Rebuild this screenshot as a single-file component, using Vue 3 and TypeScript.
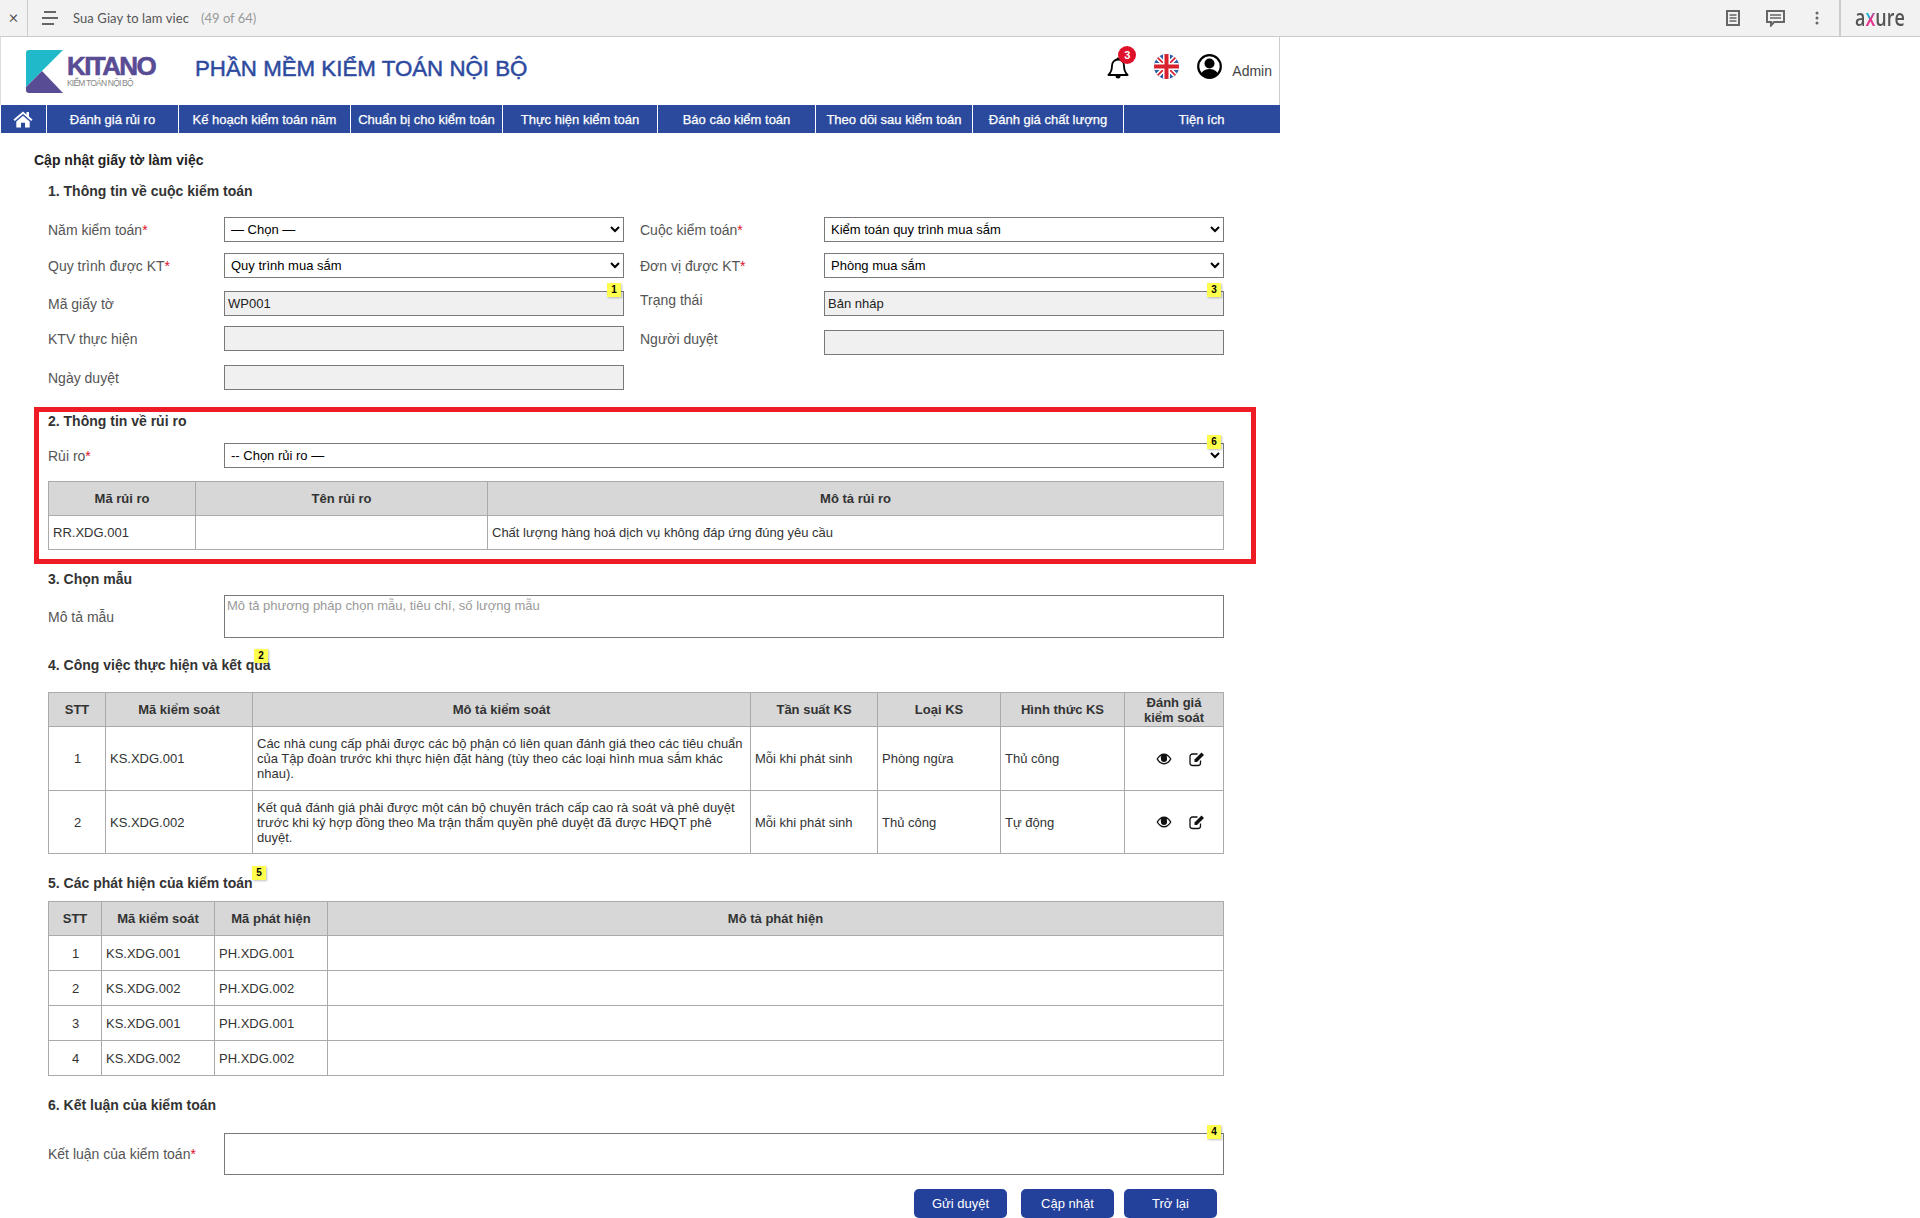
<script setup lang="ts">
interface Field {
  label: string
  required?: boolean
  kind: 'select' | 'input'
  value?: string
  note?: number
  raised?: boolean
}

const navItems = [
  'Đánh giá rủi ro',
  'Kế hoạch kiểm toán năm',
  'Chuẩn bị cho kiểm toán',
  'Thực hiện kiểm toán',
  'Báo cáo kiểm toán',
  'Theo dõi sau kiểm toán',
  'Đánh giá chất lượng',
  'Tiện ích',
]

const leftFields: Field[] = [
  { label: 'Năm kiểm toán', required: true, kind: 'select', value: '— Chọn —' },
  { label: 'Quy trình được KT', required: true, kind: 'select', value: 'Quy trình mua sắm' },
  { label: 'Mã giấy tờ', kind: 'input', value: 'WP001', note: 1 },
  { label: 'KTV thực hiện', kind: 'input' },
  { label: 'Ngày duyệt', kind: 'input' },
]

const rightFields: Field[] = [
  { label: 'Cuộc kiểm toán', required: true, kind: 'select', value: 'Kiểm toán quy trình mua sắm' },
  { label: 'Đơn vị được KT', required: true, kind: 'select', value: 'Phòng mua sắm' },
  { label: 'Trạng thái', kind: 'input', value: 'Bản nháp', note: 3, raised: true },
  { label: 'Người duyệt', kind: 'input', raised: true },
]

const controls = [
  {
    stt: 1,
    code: 'KS.XDG.001',
    desc: 'Các nhà cung cấp phải được các bộ phận có liên quan đánh giá theo các tiêu chuẩn của Tập đoàn trước khi thực hiện đặt hàng (tùy theo các loại hình mua sắm khác nhau).',
    freq: 'Mỗi khi phát sinh',
    type: 'Phòng ngừa',
    form: 'Thủ công',
  },
  {
    stt: 2,
    code: 'KS.XDG.002',
    desc: 'Kết quả đánh giá phải được một cán bộ chuyên trách cấp cao rà soát và phê duyệt trước khi ký hợp đồng theo Ma trận thẩm quyền phê duyệt đã được HĐQT phê duyệt.',
    freq: 'Mỗi khi phát sinh',
    type: 'Thủ công',
    form: 'Tự động',
  },
]

const findings = [
  { stt: 1, control: 'KS.XDG.001', code: 'PH.XDG.001' },
  { stt: 2, control: 'KS.XDG.002', code: 'PH.XDG.002' },
  { stt: 3, control: 'KS.XDG.001', code: 'PH.XDG.001' },
  { stt: 4, control: 'KS.XDG.002', code: 'PH.XDG.002' },
]
</script>

<template>
  <div class="player-bar">
    <span class="close">×</span>
    <svg class="menu-icon" width="16" height="14" viewBox="0 0 16 14">
      <rect x="2" y="0" width="12" height="2" fill="#666" />
      <rect x="0" y="6" width="16" height="2" fill="#666" />
      <rect x="0" y="12" width="12" height="2" fill="#666" />
    </svg>
    <span class="page-name">Sua Giay to lam viec</span>
    <span class="page-count">(49 of 64)</span>
    <div class="player-tools">
      <svg width="14" height="16" viewBox="0 0 14 16">
        <rect x="1" y="1" width="12" height="14" fill="none" stroke="#666" stroke-width="2" />
        <path d="M3.5 5h7M3.5 8h7M3.5 11h7" stroke="#666" stroke-width="1.5" />
      </svg>
      <svg width="19" height="17" viewBox="0 0 19 17">
        <path d="M1 1h17v11H8l-3 3.5V12H1z" fill="none" stroke="#666" stroke-width="2" />
        <path d="M4 5h11M4 8h11" stroke="#666" stroke-width="1.5" />
      </svg>
      <svg class="dots" width="4" height="14" viewBox="0 0 4 14">
        <circle cx="2" cy="2" r="1.5" fill="#666" />
        <circle cx="2" cy="7" r="1.5" fill="#666" />
        <circle cx="2" cy="12" r="1.5" fill="#666" />
      </svg>
    </div>
    <div class="axure"><span class="axure-word">a<span class="axure-x">x</span>ure</span></div>
  </div>

  <div class="app-page">
    <header class="brand-row">
      <div class="logo">
        <svg width="37" height="43" viewBox="0 0 37 43">
          <path d="M3 0h34L0 37V3a3 3 0 0 1 3-3z" fill="#1fb9c9" />
          <path d="M0 37 16 21 37 43H3a3 3 0 0 1-3-3z" fill="#584c94" />
        </svg>
        <div class="logo-text">
          <div class="logo-name">KITANO</div>
          <div class="logo-sub">KIỂM TOÁN NỘI BỘ</div>
        </div>
      </div>
      <h1 class="app-title">PHẦN MỀM KIỂM TOÁN NỘI BỘ</h1>
      <div class="user-area">
        <div class="bell">
          <svg width="22" height="23" viewBox="0 0 22 23">
            <path d="M11 2.5c-3.6 0-6 2.7-6 6.3 0 4.6-1.2 7-3.6 9.2h19.2C18.200 15.800 17 13.400 17 8.800c0-3.600-2.400-6.300-6-6.300z" fill="#fff" stroke="#000" stroke-width="1.800" stroke-linejoin="round" />
            <path d="M8.500 19a2.500 2.500 0 0 0 5 0z" fill="#000" />
            <circle cx="11" cy="1.800" r="1.300" fill="#000" />
          </svg>
          <span class="bell-badge">3</span>
        </div>
        <svg class="flag" width="25" height="25" viewBox="0 0 25 25">
          <clipPath id="flag-clip"><ellipse cx="12.500" cy="12.500" rx="12.500" ry="12.500" /></clipPath>
          <g clip-path="url(#flag-clip)">
            <rect width="25" height="25" fill="#2a5ca8" />
            <path d="M0 0 25 25M25 0 0 25" stroke="#fff" stroke-width="5" />
            <path d="M0 0 25 25M25 0 0 25" stroke="#d8202f" stroke-width="1.600" />
            <path d="M12.500 0v25M0 12.500h25" stroke="#fff" stroke-width="7" />
            <path d="M12.500 0v25M0 12.500h25" stroke="#d8202f" stroke-width="4" />
          </g>
        </svg>
        <svg class="avatar" width="25" height="25" viewBox="0 0 25 25">
          <clipPath id="avatar-clip"><circle cx="12.500" cy="12.500" r="11" /></clipPath>
          <circle cx="12.500" cy="12.500" r="11.300" fill="#fff" stroke="#000" stroke-width="2.200" />
          <g clip-path="url(#avatar-clip)">
            <circle cx="12.500" cy="9.500" r="5" fill="#000" />
            <ellipse cx="12.500" cy="22" rx="9" ry="7" fill="#000" />
          </g>
        </svg>
        <span class="admin">Admin</span>
      </div>
    </header>

    <nav class="main-nav">
      <a class="nav-item">
        <svg class="home" width="20" height="17" viewBox="0 0 20 17">
          <path d="M10 0.500 0.500 8.500l1.300 1.500L10 3.100l8.200 6.900 1.300-1.500-3.500-3V1h-2.500v2.400z" fill="#fff" />
          <path d="M10 4.800 3.300 10.400V16.500h4.700v-4.800h4v4.800h4.700v-6.100z" fill="#fff" />
        </svg>
      </a>
      <a v-for="item in navItems" :key="item" class="nav-item">{{ item }}</a>
    </nav>

    <main class="content">
      <div class="page-title">Cập nhật giấy tờ làm việc</div>

      <section class="plain-section">
        <h2 class="section-title first">1. Thông tin về cuộc kiểm toán</h2>
        <div class="audit-form">
          <div class="form-col left-col">
            <div v-for="f in leftFields" :key="f.label" class="form-row">
              <label class="field-label">{{ f.label }}<span v-if="f.required" class="req">*</span></label>
              <div class="field">
                <select v-if="f.kind === 'select'" class="ctl">
                  <option>{{ f.value }}</option>
                </select>
                <input v-else class="ctl ctl-ro" readonly :value="f.value" />
                <span v-if="f.note" class="note">{{ f.note }}</span>
              </div>
            </div>
          </div>
          <div class="form-col right-col">
            <div v-for="f in rightFields" :key="f.label" class="form-row">
              <label class="field-label" :class="{ raised: f.raised }">{{ f.label }}<span v-if="f.required" class="req">*</span></label>
              <div class="field">
                <select v-if="f.kind === 'select'" class="ctl">
                  <option>{{ f.value }}</option>
                </select>
                <input v-else class="ctl ctl-ro" readonly :value="f.value" />
                <span v-if="f.note" class="note">{{ f.note }}</span>
              </div>
            </div>
          </div>
        </div>
      </section>

      <section class="risk-box">
        <h2 class="section-title">2. Thông tin về rủi ro</h2>
        <div class="form-row risk-row">
          <label class="field-label">Rủi ro<span class="req">*</span></label>
          <div class="field wide">
            <select class="ctl"><option>-- Chọn rủi ro —</option></select>
            <span class="note">6</span>
          </div>
        </div>
        <table class="grid-table risk-table">
          <colgroup>
            <col class="w-risk-1" /><col class="w-risk-2" /><col />
          </colgroup>
          <thead>
            <tr><th>Mã rủi ro</th><th>Tên rủi ro</th><th>Mô tả rủi ro</th></tr>
          </thead>
          <tbody>
            <tr>
              <td>RR.XDG.001</td>
              <td></td>
              <td>Chất lượng hàng hoá dịch vụ không đáp ứng đúng yêu cầu</td>
            </tr>
          </tbody>
        </table>
      </section>

      <section class="plain-section">
        <h2 class="section-title s3">3. Chọn mẫu</h2>
        <div class="form-row area-row sample-row">
          <label class="field-label">Mô tả mẫu</label>
          <div class="field wide">
            <textarea class="ctl area" placeholder="Mô tả phương pháp chọn mẫu, tiêu chí, số lượng mẫu"></textarea>
          </div>
        </div>

        <h2 class="section-title s4">4. Công việc thực hiện và kết quả<span class="note note-2">2</span></h2>
        <table class="grid-table work-table">
          <colgroup>
            <col class="w-a" /><col class="w-b" /><col class="w-c" /><col class="w-d" /><col class="w-e" /><col class="w-f" /><col />
          </colgroup>
          <thead>
            <tr>
              <th>STT</th><th>Mã kiểm soát</th><th>Mô tả kiểm soát</th><th>Tần suất KS</th><th>Loại KS</th><th>Hình thức KS</th><th>Đánh giá<br />kiểm soát</th>
            </tr>
          </thead>
          <tbody>
            <tr v-for="c in controls" :key="c.stt">
              <td class="center">{{ c.stt }}</td>
              <td>{{ c.code }}</td>
              <td>{{ c.desc }}</td>
              <td>{{ c.freq }}</td>
              <td>{{ c.type }}</td>
              <td>{{ c.form }}</td>
              <td>
                <div class="row-actions">
                  <svg width="16" height="12" viewBox="0 0 16 12">
                    <path d="M0.500 6C2.500 2.500 5 0.500 8 0.500S13.500 2.500 15.500 6C13.500 9.500 11 11.500 8 11.500S2.500 9.500 0.500 6z" fill="#111" />
                    <path d="M2 6c1-1.500 2-2.600 3.300-3.300A4 4 0 0 0 5 6a3 3 0 0 0 6 0c0-1.200-.1-2.400-.3-3.300C12 3.400 13 4.500 14 6c-1.600 2.400-3.600 4-6 4S3.600 8.400 2 6z" fill="#fff" />
                    <circle cx="8" cy="5.500" r="2.600" fill="#111" />
                  </svg>
                  <svg width="16" height="16" viewBox="0 0 16 16">
                    <path d="M11.500 9.500V12a2.500 2.500 0 0 1-2.500 2.500H3.500A2.500 2.500 0 0 1 1 12V5.500A2.500 2.500 0 0 1 3.500 3h5" fill="none" stroke="#111" stroke-width="1.300" />
                    <path d="M5.500 8.500 12.500 1.500l2.500 2.500-7 7H5.500z" fill="#111" />
                  </svg>
                </div>
              </td>
            </tr>
          </tbody>
        </table>

        <h2 class="section-title s5">5. Các phát hiện của kiểm toán<span class="note note-5">5</span></h2>
        <table class="grid-table finding-table">
          <colgroup>
            <col class="w-g" /><col class="w-h" /><col class="w-i" /><col />
          </colgroup>
          <thead>
            <tr><th>STT</th><th>Mã kiểm soát</th><th>Mã phát hiện</th><th>Mô tả phát hiện</th></tr>
          </thead>
          <tbody>
            <tr v-for="r in findings" :key="r.stt">
              <td class="center">{{ r.stt }}</td>
              <td>{{ r.control }}</td>
              <td>{{ r.code }}</td>
              <td></td>
            </tr>
          </tbody>
        </table>

        <h2 class="section-title s6">6. Kết luận của kiểm toán</h2>
        <div class="form-row area-row conclusion">
          <label class="field-label">Kết luận của kiểm toán<span class="req">*</span></label>
          <div class="field wide">
            <textarea class="ctl area"></textarea>
            <span class="note">4</span>
          </div>
        </div>

        <div class="actions">
          <button class="btn">Gửi duyệt</button>
          <button class="btn">Cập nhật</button>
          <button class="btn">Trở lại</button>
        </div>
      </section>
    </main>
  </div>
</template>

<style>
html,
body {
  background: #fff;
  overflow: hidden;
}
</style>

<style scoped>
.player-bar {
  height: 36px;
  background: #f2f2f2;
  border-bottom: 1px solid #ccc;
  display: flex;
  align-items: center;
  font-family: Lato, "Open Sans", sans-serif;
  font-size: 13px;
  color: #555;
}

.close {
  width: 28px;
  border-right: 1px solid #ccc;
  height: 36px;
  line-height: 36px;
  text-align: center;
  font-size: 17px;
  flex: none;
  box-sizing: border-box;
}

.menu-icon {
  margin: 0 15px 0 14px;
  flex: none;
}

.page-name {
  letter-spacing: 0.1px;
}

.page-count {
  color: #999;
  margin-left: 12px;
}

.player-tools {
  margin-left: auto;
  display: flex;
  align-items: center;
  width: 113px;
  gap: 26px;
}

.dots {
  margin-left: 4px;
}

.axure {
  width: 81px;
  height: 37px;
  border-left: 2px solid #ccc;
  box-sizing: border-box;
  padding-left: 14px;
  overflow: hidden;
}

.axure-word {
  display: inline-block;
  font-family: "Open Sans", sans-serif;
  font-size: 23px;
  font-weight: 600;
  line-height: 35px;
  color: #555;
  transform: scaleX(0.78);
  transform-origin: left center;
}

.axure-x {
  background: linear-gradient(135deg, #1fb5d8 45%, #e8308c 55%);
  -webkit-background-clip: text;
  background-clip: text;
  color: transparent;
}

.app-page {
  width: 1280px;
  font-family: "Liberation Sans", Arial, sans-serif;
  font-size: 13px;
  color: #333;
}

.brand-row {
  height: 68px;
  box-sizing: border-box;
  border-left: 1px solid #ddd;
  border-right: 1px solid #ccc;
  padding-left: 25px;
  display: flex;
  align-items: flex-start;
}

.logo {
  display: flex;
  width: 169px;
  margin-top: 13px;
  flex: none;
}

.logo-text {
  margin-left: 4px;
}

.logo-name {
  font-size: 26px;
  line-height: 24px;
  margin-top: 4px;
  font-weight: 700;
  color: #584c94;
  letter-spacing: -1.6px;
  -webkit-text-stroke: 0.6px #584c94;
}

.logo-sub {
  font-size: 8.5px;
  line-height: 10px;
  color: #888;
  letter-spacing: -0.8px;
}

.app-title {
  margin: 17px 0 0;
  font-size: 22.3px;
  line-height: 30px;
  font-weight: 400;
  -webkit-text-stroke: 0.5px #2e4a9f;
  color: #2e4a9f;
}

.user-area {
  margin-left: auto;
  margin-top: 17px;
  display: flex;
  align-items: flex-start;
  padding-right: 7px;
}

.bell {
  position: relative;
  width: 22px;
  height: 23px;
  margin-top: 3px;
}

.bell-badge {
  position: absolute;
  left: 11px;
  top: -11px;
  width: 18px;
  height: 18px;
  line-height: 18px;
  border-radius: 50%;
  background: #e0112b;
  color: #fff;
  text-align: center;
  font-size: 11px;
  font-weight: 700;
}

.flag {
  margin-left: 25px;
}

.avatar {
  margin-left: 18px;
}

.admin {
  margin-left: 10px;
  line-height: 16px;
  margin-top: 9px;
  font-size: 14px;
  color: #444;
}

.main-nav {
  margin-left: 1px;
  height: 28px;
  display: grid;
  grid-template-columns: 46px 132px 172px 152px 155px 158px 157px 151px 155px;
  background: #2b4a9e;
}

.nav-item {
  display: flex;
  align-items: center;
  justify-content: center;
  color: #fff;
  border-right: 1px solid #fff;
  font-size: 13px;
  white-space: nowrap;
  -webkit-text-stroke: 0.25px #fff;
}

.nav-item:last-child {
  border-right: 0;
}

.home {
  margin-right: 2px;
}

.content {
  padding-left: 34px;
}

.page-title {
  margin-top: 17px;
  font-size: 14px;
  line-height: 20px;
  font-weight: 700;
  color: #222;
}

.plain-section {
  padding-left: 14px;
}

.section-title {
  position: relative;
  margin: 0;
  font-size: 14px;
  line-height: 18px;
  font-weight: 700;
  color: #333;
}

.section-title.first {
  margin-top: 12px;
}

.audit-form {
  display: flex;
  margin-top: 17px;
}

.form-col {
  flex: none;
}

.left-col {
  width: 592px;
}

.form-row {
  display: flex;
  align-items: center;
}

.left-col .form-row:nth-child(2),
.right-col .form-row:nth-child(2) {
  margin-top: 11px;
}

.left-col .form-row:nth-child(3),
.right-col .form-row:nth-child(3) {
  margin-top: 13px;
}

.left-col .form-row:nth-child(4) {
  margin-top: 10px;
}

.left-col .form-row:nth-child(5) {
  margin-top: 14px;
}

.right-col .form-row:nth-child(4) {
  margin-top: 14px;
}

.field-label {
  width: 176px;
  flex: none;
  font-size: 14px;
  color: #555;
}

.right-col .field-label {
  width: 184px;
}

.field-label.raised {
  margin-bottom: 8px;
}

.req {
  color: #e0112b;
}

.field {
  position: relative;
  width: 400px;
  height: 25px;
}

.field.wide {
  width: 1000px;
}

.ctl {
  display: block;
  width: 100%;
  height: 100%;
  box-sizing: border-box;
  border: 1px solid #797979;
  border-radius: 0;
  outline: none;
  margin: 0;
  background-color: #fff;
  font-family: "Liberation Sans", Arial, sans-serif;
  font-size: 13px;
  color: #000;
}

select.ctl {
  padding-left: 2px;
}

.ctl-ro {
  background: #f0f0f0;
  padding: 0 3px;
  color: #222;
}

.area {
  resize: none;
  padding: 2px;
  line-height: 15px;
}

.area::placeholder {
  color: #999;
  opacity: 1;
}

.note {
  position: absolute;
  right: 3px;
  top: -8px;
  width: 14px;
  height: 14px;
  line-height: 14px;
  background: #ffff4d;
  box-shadow: 1px 1px 2px rgba(0, 0, 0, 0.25);
  color: #000;
  text-align: center;
  font-size: 10px;
  font-weight: 700;
}

.note-2 {
  right: auto;
  left: 206px;
  top: -7px;
}

.note-5 {
  right: auto;
  left: 204px;
  top: -8px;
}

.risk-box {
  margin-top: 17px;
  width: 1222px;
  box-sizing: border-box;
  border: 5px solid #ee1c25;
  padding: 0 0 9px 9px;
}

.risk-row {
  margin-top: 13px;
}

.grid-table {
  border-collapse: collapse;
  table-layout: fixed;
  width: 1176px;
}

.grid-table th,
.grid-table td {
  border: 1px solid #aaa;
  padding: 0 3px 0 4px;
  font-size: 13px;
  line-height: 15px;
  color: #333;
  text-align: left;
}

.grid-table th {
  background: #d7d7d7;
  text-align: center;
  font-weight: 700;
  padding: 0 2px;
}

.center {
  text-align: center !important;
}

.risk-table {
  margin-top: 13px;
}

.risk-table tr {
  height: 34px;
}

.w-risk-1 { width: 147px; }
.w-risk-2 { width: 292px; }

.s3 {
  margin-top: 6px;
}

.area-row {
  margin-top: 7px;
}

.area-row .field {
  height: 42px;
}

.sample-row .field {
  height: 43px;
}

.s4 {
  margin-top: 18px;
}

.work-table {
  margin-top: 18px;
}

.work-table thead tr {
  height: 34px;
}

.work-table tbody tr {
  height: 64px;
}

.work-table tbody tr:last-child {
  height: 63px;
}

.w-a { width: 57px; }
.w-b { width: 147px; }
.w-c { width: 498px; }
.w-d { width: 127px; }
.w-e { width: 123px; }
.w-f { width: 124px; }

.row-actions {
  display: flex;
  align-items: center;
  justify-content: flex-end;
  gap: 17px;
  padding-right: 15px;
}

.s5 {
  margin-top: 20px;
}

.finding-table {
  margin-top: 9px;
}

.finding-table tr {
  height: 35px;
}

.finding-table thead tr {
  height: 34px;
}

.w-g { width: 53px; }
.w-h { width: 113px; }
.w-i { width: 113px; }

.s6 {
  margin-top: 20px;
}

.conclusion {
  margin-top: 19px;
}

.actions {
  display: flex;
  margin: 14px 0 0 866px;
}

.btn {
  width: 93px;
  height: 29px;
  border: 0;
  padding: 0;
  border-radius: 5px;
  background: #23409a;
  color: #fff;
  font-family: "Liberation Sans", Arial, sans-serif;
  font-size: 13px;
}

.btn + .btn {
  margin-left: 14px;
}

.btn:last-child {
  margin-left: 10px;
}
</style>
